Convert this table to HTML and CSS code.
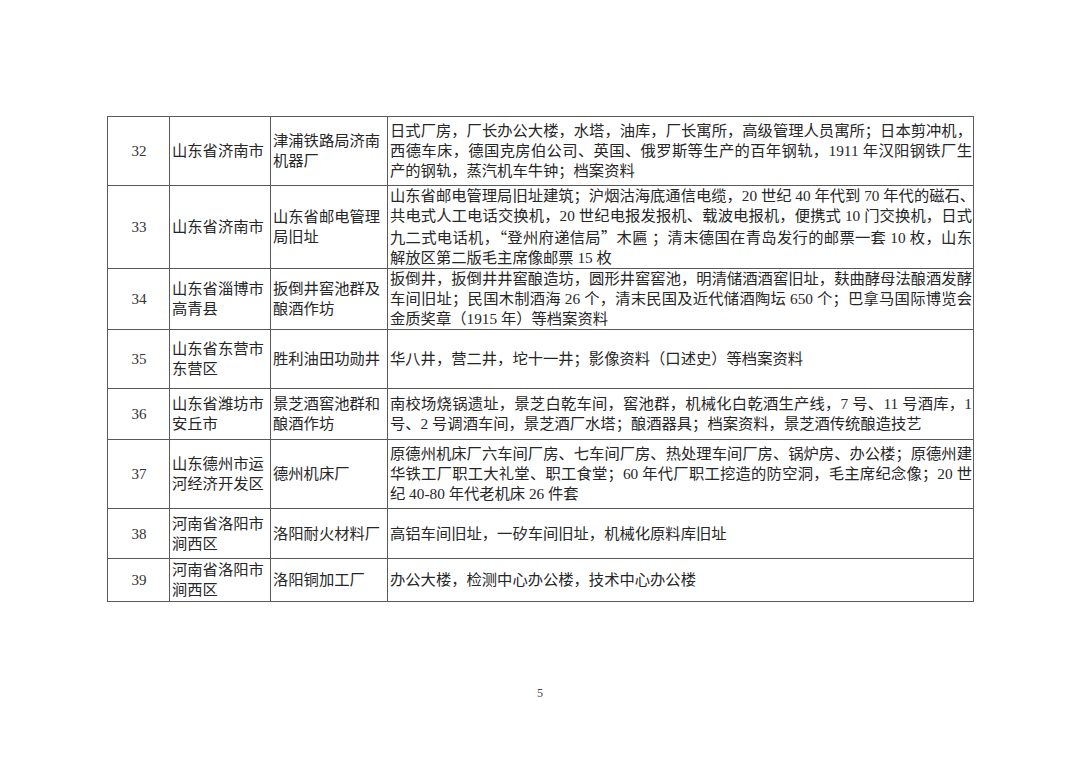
FILE: index.html
```html
<!DOCTYPE html>
<html lang="zh-CN">
<head>
<meta charset="utf-8">
<title>第5页</title>
<link rel="stylesheet" href="styles.css">
</head>
<body>
<div class="page">
  <table class="list">
    <colgroup>
      <col class="c-no"><col class="c-loc"><col class="c-name"><col class="c-desc">
    </colgroup>
    <tbody>
      <tr class="r32">
        <td class="no">32</td>
        <td>山东省济南市</td>
        <td>津浦铁路局济南机器厂</td>
        <td class="desc">
          <span class="ln f">日式厂房，厂长办公大楼，水塔，油库，厂长寓所，高级管理人员寓所；日本剪冲机，</span>
          <span class="ln f">西德车床，德国克房伯公司、英国、俄罗斯等生产的百年钢轨，1911 年汉阳钢铁厂生</span>
          <span class="ln">产的钢轨，蒸汽机车牛钟；档案资料</span>
        </td>
      </tr>
      <tr class="r33">
        <td class="no">33</td>
        <td>山东省济南市</td>
        <td>山东省邮电管理局旧址</td>
        <td class="desc">
          <span class="ln f">山东省邮电管理局旧址建筑；沪烟沽海底通信电缆，20 世纪 40 年代到 70 年代的磁石、</span>
          <span class="ln f">共电式人工电话交换机，20 世纪电报发报机、载波电报机，便携式 10 门交换机，日式</span>
          <span class="ln f">九二式电话机，<span class="cjk">“</span>登州府递信局<span class="cjk">”</span>木匾 ；清末德国在青岛发行的邮票一套 10 枚，山东</span>
          <span class="ln">解放区第二版毛主席像邮票 15 枚</span>
        </td>
      </tr>
      <tr class="r34">
        <td class="no">34</td>
        <td>山东省淄博市高青县</td>
        <td>扳倒井窖池群及酿酒作坊</td>
        <td class="desc">
          <span class="ln f">扳倒井，扳倒井井窖酿造坊，圆形井窖窖池，明清储酒酒窖旧址，麸曲酵母法酿酒发酵</span>
          <span class="ln f">车间旧址；民国木制酒海 26 个，清末民国及近代储酒陶坛 650 个；巴拿马国际博览会</span>
          <span class="ln">金质奖章（1915 年）等档案资料</span>
        </td>
      </tr>
      <tr class="r35">
        <td class="no">35</td>
        <td>山东省东营市东营区</td>
        <td>胜利油田功勋井</td>
        <td class="desc">
          <span class="ln">华八井，营二井，坨十一井；影像资料（口述史）等档案资料</span>
        </td>
      </tr>
      <tr class="r36">
        <td class="no">36</td>
        <td>山东省潍坊市安丘市</td>
        <td>景芝酒窖池群和酿酒作坊</td>
        <td class="desc">
          <span class="ln f">南校场烧锅遗址，景芝白乾车间，窖池群，机械化白乾酒生产线，7 号、11 号酒库，1</span>
          <span class="ln">号、2 号调酒车间，景芝酒厂水塔；酿酒器具；档案资料，景芝酒传统酿造技艺</span>
        </td>
      </tr>
      <tr class="r37">
        <td class="no">37</td>
        <td>山东德州市运河经济开发区</td>
        <td>德州机床厂</td>
        <td class="desc">
          <span class="ln f">原德州机床厂六车间厂房、七车间厂房、热处理车间厂房、锅炉房、办公楼；原德州建</span>
          <span class="ln f">华铁工厂职工大礼堂、职工食堂；60 年代厂职工挖造的防空洞，毛主席纪念像；20 世</span>
          <span class="ln">纪 40-80 年代老机床 26 件套</span>
        </td>
      </tr>
      <tr class="r38">
        <td class="no">38</td>
        <td>河南省洛阳市涧西区</td>
        <td>洛阳耐火材料厂</td>
        <td class="desc">
          <span class="ln">高铝车间旧址，一矽车间旧址，机械化原料库旧址</span>
        </td>
      </tr>
      <tr class="r39">
        <td class="no">39</td>
        <td>河南省洛阳市涧西区</td>
        <td>洛阳铜加工厂</td>
        <td class="desc">
          <span class="ln">办公大楼，检测中心办公楼，技术中心办公楼</span>
        </td>
      </tr>
    </tbody>
  </table>
  <div class="pageno">5</div>
</div>
</body>
</html>
```

FILE: styles.css
```css
html, body {
  margin: 0;
  padding: 0;
  background: #ffffff;
}

.page {
  width: 1080px;
  height: 763px;
  box-sizing: border-box;
  padding: 116px 0 0 107px;
  font-family: "Liberation Serif", "Noto Sans CJK SC", serif;
  color: #262626;
}

.list {
  border-collapse: collapse;
  table-layout: fixed;
  width: 866px;
  font-size: 15.3px;
  line-height: 20px;
}

.c-no { width: 62px; }
.c-loc { width: 101px; }
.c-name { width: 117px; }
.c-desc { width: 586px; }

.list td {
  border: 1px solid #5a5a5a;
  padding: 0 1px 0 2px;
  vertical-align: middle;
  text-align: left;
  overflow: visible;
}

.list td.no {
  text-align: center;
  font-size: 15px;
  color: #333333;
}

.desc .ln {
  display: block;
  white-space: nowrap;
}

.desc .ln.f {
  text-align: justify;
  text-align-last: justify;
}

.cjk {
  font-family: "Noto Sans CJK SC", sans-serif;
}

.r32 { height: 69px; }
.r33 { height: 82px; }
.r34 { height: 61px; }
.r35 { height: 59px; }
.r36 { height: 51px; }
.r37 { height: 69px; }
.r38 { height: 50px; }
.r39 { height: 43px; }

.pageno {
  width: 866px;
  margin-top: 84px;
  text-align: center;
  font-size: 12px;
  line-height: 14px;
  color: #444444;
}
```
